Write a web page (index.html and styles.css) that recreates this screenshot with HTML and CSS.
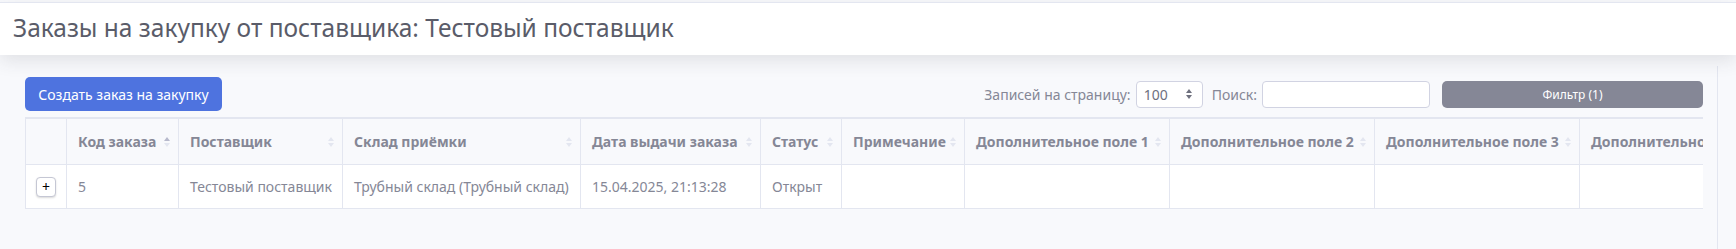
FILE: index.html
```html
<!DOCTYPE HTML>
<html>

<head>
	<meta charset="utf-8">

	<link rel="stylesheet" href="styles.css">
</head>

<body>

	<header class="topbar">
		<h1 class="page-title">Заказы на закупку от поставщика: Тестовый поставщик</h1>
	</header>

	<div class="main">
		<div class="content">

			<div class="toolbar">
				<button class="btn btn-primary">Создать заказ на закупку</button>

				<div class="controls">
					<label class="ctrl-label">Записей на страницу:</label>
					<div class="select">
						<span>100</span>
						<svg width="8" height="12" viewBox="0 0 8 12">
							<path d="M4 1 L7 5 H1 Z M4 11 L7 7 H1 Z" fill="#6e707e"/>
						</svg>
					</div>
					<label class="ctrl-label">Поиск:</label>
					<input class="search" type="text">
					<button class="btn btn-filter">Фильтр (1)</button>
				</div>
			</div>

			<div class="table-wrap">
				<table class="orders">
					<colgroup>
						<col style="width: 41px">
						<col style="width: 112px">
						<col style="width: 164px">
						<col style="width: 238px">
						<col style="width: 180px">
						<col style="width: 81px">
						<col style="width: 123px">
						<col style="width: 205px">
						<col style="width: 205px">
						<col style="width: 205px">
						<col style="width: 205px">
					</colgroup>
					<tr>
						<th></th>
						<th><div class="th-in">Код заказа<span class="sort asc"><i></i><b></b></span></div></th>
						<th><div class="th-in">Поставщик<span class="sort"><i></i><b></b></span></div></th>
						<th><div class="th-in">Склад приёмки<span class="sort"><i></i><b></b></span></div></th>
						<th><div class="th-in">Дата выдачи заказа<span class="sort"><i></i><b></b></span></div></th>
						<th><div class="th-in">Статус<span class="sort"><i></i><b></b></span></div></th>
						<th><div class="th-in">Примечание<span class="sort"><i></i><b></b></span></div></th>
						<th><div class="th-in">Дополнительное поле 1<span class="sort"><i></i><b></b></span></div></th>
						<th><div class="th-in">Дополнительное поле 2<span class="sort"><i></i><b></b></span></div></th>
						<th><div class="th-in">Дополнительное поле 3<span class="sort"><i></i><b></b></span></div></th>
						<th><div class="th-in">Дополнительное поле 4<span class="sort"><i></i><b></b></span></div></th>
					</tr>
					<tr>
						<td class="expand"><span class="plus">+</span></td>
						<td>5</td>
						<td>Тестовый поставщик</td>
						<td>Трубный склад (Трубный склад)</td>
						<td>15.04.2025, 21:13:28</td>
						<td>Открыт</td>
						<td></td>
						<td></td>
						<td></td>
						<td></td>
						<td></td>
					</tr>
				</table>
			</div>

		</div>
		<div class="side"></div>
	</div>

</body>

</html>
```

FILE: styles.css
```css
* {
	box-sizing: border-box;
}

body {
	margin: 0;
	background-color: #f8f9fc;
	font-family: "Noto Sans", "Open Sans", sans-serif;
	font-size: 14px;
	color: #858796;
}

.topbar {
	margin-top: 2px;
	height: 53px;
	border-top: 1px solid #e3e6f0;
	background-color: #fff;
	box-shadow: 0 6px 18px rgba(58, 59, 69, 0.12);
	display: flex;
	align-items: center;
	padding-left: 13px;
	position: relative;
}

.page-title {
	margin: 0 0 4px;
	font-size: 24.5px;
	font-weight: 400;
	color: #5a5c69;
}

.main {
	display: flex;
}

.content {
	flex: 1;
	min-width: 0;
	padding: 22px 14px 0 25px;
}

.side {
	width: 19px;
	margin-top: 11px;
	height: 183px;
	border-left: 1px solid #e3e6f0;
}

.toolbar {
	display: flex;
	justify-content: space-between;
	align-items: center;
	height: 34px;
}

.btn {
	border: none;
	border-radius: 5px;
	font-family: inherit;
	color: #fff;
	cursor: pointer;
}

.btn-primary {
	width: 197px;
	height: 34px;
	background-color: #4e73df;
	font-size: 14px;
}

.controls {
	display: flex;
	align-items: center;
}

.ctrl-label {
	margin-right: 5px;
}

.select {
	width: 67px;
	height: 27px;
	border: 1px solid #d1d3e2;
	border-radius: 4px;
	background-color: #fff;
	display: flex;
	align-items: center;
	justify-content: space-between;
	padding: 0 9px 0 7px;
	color: #6e707e;
	margin-right: 9px;
}

.search {
	width: 168px;
	height: 27px;
	border: 1px solid #d1d3e2;
	border-radius: 4px;
	background-color: #fff;
	margin: 0 12px 0 0;
}

.btn-filter {
	width: 261px;
	height: 27px;
	background-color: #858796;
	font-size: 12px;
}

.table-wrap {
	margin-top: 6px;
	overflow: hidden;
	border-top: 1px solid #e3e6f0;
}

.orders {
	table-layout: fixed;
	width: 1759px;
	border-collapse: collapse;
}

th,
td {
	border: 1px solid #e3e6f0;
	padding: 0 8px 0 11px;
	text-align: left;
	white-space: nowrap;
	overflow: hidden;
}

th {
	height: 46px;
	background-color: #f8f9fc;
	font-weight: 700;
	color: #858796;
}

td {
	height: 44px;
	background-color: #fff;
}

.th-in {
	display: flex;
	justify-content: space-between;
	align-items: center;
}

.sort {
	display: flex;
	flex-direction: column;
	gap: 2px;
	margin-left: 4px;
}

.sort i,
.sort b {
	width: 0;
	height: 0;
	border-left: 3px solid transparent;
	border-right: 3px solid transparent;
}

.sort i {
	border-bottom: 4px solid #e3e6f0;
}

.sort b {
	border-top: 4px solid #e3e6f0;
}

.sort.asc i {
	border-bottom-color: #b7b9cc;
}

.expand {
	padding: 0;
	text-align: center;
}

.plus {
	display: inline-flex;
	align-items: center;
	justify-content: center;
	width: 20px;
	height: 20px;
	border: 1px solid #c5c7d4;
	border-radius: 4px;
	box-shadow: 0 1px 2px rgba(0, 0, 0, 0.15);
	background-color: #fff;
	color: #000;
	font-size: 14px;
	line-height: 1;
}
```
